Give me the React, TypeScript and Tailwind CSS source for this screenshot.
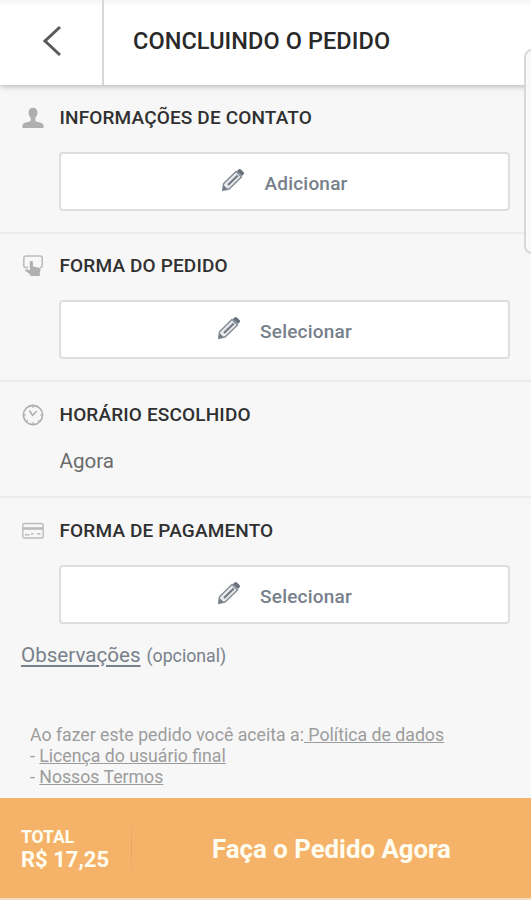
import React from "react";

const UserIcon = () => (
  <svg width="22" height="22" viewBox="0 0 22 22" fill="#afafaf">
    <path d="M11 0.8C8.300 0.800 6.600 2.800 6.600 5.500C6.600 7.600 7.400 9.600 8.700 10.800V13.200C8.700 13.800 8.300 14.200 7.700 14.400L3.100 15.700C1.300 16.200 0.400 17.300 0.400 19V20.200C0.400 20.800 0.700 21 1.200 21H20.800C21.300 21 21.600 20.800 21.600 20.200V19C21.600 17.300 20.700 16.200 18.900 15.700L14.300 14.400C13.700 14.200 13.300 13.800 13.300 13.200V10.800C14.600 9.600 15.400 7.600 15.400 5.500C15.400 2.800 13.700 0.800 11 0.800Z" />
  </svg>
);

const TouchIcon = () => (
  <svg width="22" height="22" viewBox="0 0 22 22" fill="none">
    <path
      d="M6 12.500H4C2.500 12.500 1.800 11.700 1.800 10.400V3.100C1.800 1.800 2.500 1 4 1H18C19.500 1 20.200 1.800 20.200 3.100V10.400C20.200 11.700 19.500 12.500 18 12.500"
      stroke="#bdbdbd"
      strokeWidth="1.600"
    />
    <path
      d="M7.800 7.500C7.800 5.600 11 5.600 11 7.500V11.500L17 12.700C18.100 12.900 18.600 13.500 18.500 14.600L17.800 18.300V21H8.300V19.600L3.500 16C2.600 14.900 3.900 13.800 5.100 14.300L7.800 15.600Z"
      fill="#b0b0b0"
    />
  </svg>
);

const ClockIcon = () => (
  <svg width="22" height="22" viewBox="0 0 22 22" fill="none" stroke="#adadad">
    <circle cx="11" cy="11" r="9.600" strokeWidth="1.600" />
    <path d="M7.500 6.500L10.500 11.300L15 7" strokeWidth="1.500" />
    <path
      d="M11 1.500V4M11 18V20.500M1.500 11H4M18 11H20.500M4.500 17.500L5.900 16.100M17.500 17.500L16.100 16.100"
      strokeWidth="1.100"
    />
  </svg>
);

const CardIcon = () => (
  <svg width="22" height="22" viewBox="0 0 22 22" fill="none" stroke="#bcbcbc">
    <rect x="0.800" y="3.500" width="20.400" height="14.500" rx="1.500" strokeWidth="1.400" />
    <path d="M1 8.500H21" strokeWidth="2.600" />
    <path d="M3 14.700H7.500M9 13.800H11.500M15 13.800H18.500" strokeWidth="1.400" />
  </svg>
);

const PencilIcon = () => (
  <svg width="24" height="24" viewBox="0 0 24 24" fill="none">
    <path
      d="M2.500 15.800L15 3.500L20.500 9L8 21L1.700 22.300Z"
      fill="#e9ebed"
      stroke="#858c96"
      strokeWidth="1.400"
    />
    <path d="M15.800 3.200L17.500 1.500C18.200 0.800 19.200 0.800 19.900 1.500L22.500 4.100C23.200 4.800 23.200 5.700 22.500 6.400L20.900 8.100Z" fill="#69717e" />
    <path d="M2.500 17L6.800 21.200L1.700 22.300Z" fill="#737b86" />
    <path d="M7 17L16.800 7.500" stroke="#737b86" strokeWidth="2.200" />
  </svg>
);

type SectionProps = {
  icon: React.ReactNode;
  title: string;
  className: string;
  children: React.ReactNode;
};

const Section = ({ icon, title, className, children }: SectionProps) => (
  <section className={`px-[22px] ${className}`}>
    <div className="flex h-[22px] items-center">
      {icon}
      <h2 className="ml-[15.5px] whitespace-nowrap text-[19px] leading-[22px] font-medium tracking-[0.15px] text-[#303030]">
        {title}
      </h2>
    </div>
    {children}
  </section>
);

const FieldButton = ({ label }: { label: string }) => (
  <button className="ml-[37px] mt-[23px] flex h-[59px] w-[451px] items-center justify-center rounded-[4px] border-2 border-[#dcdfe1] bg-white">
    <span className="mb-[4px] mr-[19px]">
      <PencilIcon />
    </span>
    <span className="mt-[4px] text-[19px] leading-[27px] font-medium tracking-[0.2px] text-[#77808b]">
      {label}
    </span>
  </button>
);

const App = () => {
  return (
    <div className="relative flex h-[900px] w-[531px] flex-col overflow-hidden bg-[#f7f7f7] font-[Roboto,sans-serif]">
      <header className="z-10 flex h-[85px] shrink-0 bg-gradient-to-b from-[#f4f4f4] to-white to-[6px] shadow-[0_1px_6px_rgba(0,0,0,0.3)]">
        <button className="flex w-[104px] items-center justify-center border-r-2 border-[#d8d8d8]">
          <svg className="ml-[2px] mt-[-4px]" width="20" height="32" viewBox="0 0 20 32" fill="none">
            <path d="M18 2L3 16L18 30" stroke="#5a5a5a" strokeWidth="3" />
          </svg>
        </button>
        <h1 className="ml-[29px] mt-[24px] whitespace-nowrap text-[23.500px] leading-[34px] font-medium tracking-[0.08px] text-[#292929]">
          CONCLUINDO O PEDIDO
        </h1>
      </header>

      <main className="flex flex-1 flex-col">
        <Section
          icon={<UserIcon />}
          title="INFORMAÇÕES DE CONTATO"
          className="h-[149px] border-b-2 border-[#ececed] pt-[22px]"
        >
          <FieldButton label="Adicionar" />
        </Section>
        <Section
          icon={<TouchIcon />}
          title="FORMA DO PEDIDO"
          className="h-[148px] border-b-2 border-[#ececed] pt-[21px]"
        >
          <FieldButton label="Selecionar" />
        </Section>
        <Section
          icon={<ClockIcon />}
          title="HORÁRIO ESCOLHIDO"
          className="h-[116px] border-b-2 border-[#ececed] pt-[22px]"
        >
          <p className="ml-[37.500px] mt-[21px] text-[20.600px] leading-[28px] text-[#6b6b6b]">Agora</p>
        </Section>
        <Section icon={<CardIcon />} title="FORMA DE PAGAMENTO" className="h-[126px] pt-[22px]">
          <FieldButton label="Selecionar" />
        </Section>

        <p className="ml-[21px] mt-[17px] leading-[28px] text-[#78818b]">
          <a className="text-[20.600px] underline underline-offset-[3px]">Observações</a>
          <span className="ml-[6px] text-[17.700px]">(opcional)</span>
        </p>
        <div className="ml-[30px] mt-[54px] whitespace-nowrap text-[17.700px] leading-[21px] text-[#9c9c9c]">
          <p>
            Ao fazer este pedido você aceita a:
            <a className="whitespace-pre underline"> Política de dados</a>
          </p>
          <p>
            - <a className="underline">Licença do usuário final</a>
          </p>
          <p>
            - <a className="underline">Nossos Termos</a>
          </p>
        </div>
      </main>

      <footer className="flex h-[102px] shrink-0 items-center border-b-2 border-[#f7dcbd] bg-[#f5b36a] text-[#fffdf0]">
        <div className="ml-[21px] mt-[2px] w-[110px] whitespace-nowrap font-bold">
          <p className="text-[17.500px] leading-[22px]">TOTAL</p>
          <p className="text-[22px] leading-[24px]">R$ 17,25</p>
        </div>
        <div className="h-[56px] w-px bg-gradient-to-b from-[#f5b36a] via-[#e2a35f] to-[#f5b36a]" />
        <button className="ml-[80px] mt-[3px] whitespace-nowrap text-[25.800px] font-bold">Faça o Pedido Agora</button>
      </footer>

      {/* edge panel handle, runs off the right side of the screen */}
      <div className="absolute left-[524px] top-[49px] z-20 h-[205px] w-[20px] rounded-[8px] border-2 border-[#d6d8d9] bg-[#fafafa]/90" />
    </div>
  );
};

export default App;
